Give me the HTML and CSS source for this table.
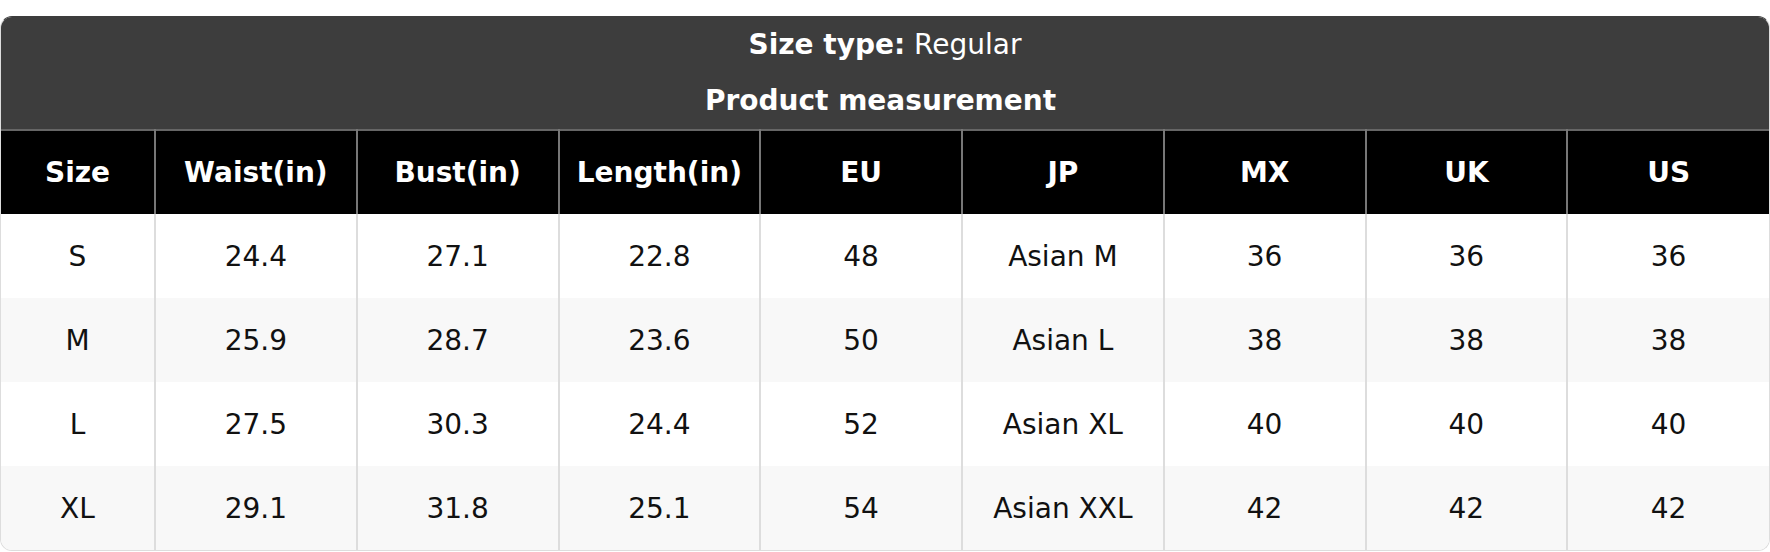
FILE: index.html
```html
<!DOCTYPE html>
<html>
<head>
<meta charset="utf-8">
<link rel="stylesheet" href="styles.css">
</head>
<body>
<div class="page">
  <div class="card">
    <div class="title">
      <div class="title-line"><b>Size type:</b> Regular</div>
      <div class="title-line title-sub"><b>Product measurement</b></div>
    </div>
    <table class="chart">
      <colgroup>
        <col class="col-size">
        <col><col><col><col><col><col><col><col>
      </colgroup>
      <thead>
        <tr>
          <th>Size</th><th>Waist(in)</th><th>Bust(in)</th><th>Length(in)</th><th>EU</th><th>JP</th><th>MX</th><th>UK</th><th>US</th>
        </tr>
      </thead>
      <tbody>
        <tr><td>S</td><td>24.4</td><td>27.1</td><td>22.8</td><td>48</td><td>Asian M</td><td>36</td><td>36</td><td>36</td></tr>
        <tr><td>M</td><td>25.9</td><td>28.7</td><td>23.6</td><td>50</td><td>Asian L</td><td>38</td><td>38</td><td>38</td></tr>
        <tr><td>L</td><td>27.5</td><td>30.3</td><td>24.4</td><td>52</td><td>Asian XL</td><td>40</td><td>40</td><td>40</td></tr>
        <tr><td>XL</td><td>29.1</td><td>31.8</td><td>25.1</td><td>54</td><td>Asian XXL</td><td>42</td><td>42</td><td>42</td></tr>
      </tbody>
    </table>
  </div>
</div>
</body>
</html>
```

FILE: styles.css
```css
html, body {
  margin: 0;
  padding: 0;
  background: #ffffff;
}

.page {
  padding-top: 16px;
  font-family: "DejaVu Sans", "Liberation Sans", sans-serif;
  font-size: 28px;
  color: #111111;
}

.card {
  width: 1770px;
  box-sizing: border-box;
  border: 1px solid #dddddd;
  border-top-color: #3d3d3d;
  border-radius: 12px;
  overflow: hidden;
  background: #ffffff;
}

.title {
  background: #3d3d3d;
  color: #ffffff;
  text-align: center;
}

.title-line {
  height: 56px;
  line-height: 56px;
}

.title-sub {
  padding-right: 9px;
}

.title-line b {
  font-weight: bold;
}

.chart {
  width: 100%;
  table-layout: fixed;
  border-collapse: collapse;
  border-spacing: 0;
}

.col-size {
  width: 154px;
}

.chart thead tr {
  border-top: 2px solid #666666;
}

.chart th {
  background: #000000;
  color: #ffffff;
  font-weight: bold;
  height: 83px;
  padding: 0;
  text-align: center;
  vertical-align: middle;
  border-left: 2px solid #777777;
}

.chart td {
  height: 84px;
  padding: 0;
  text-align: center;
  vertical-align: middle;
  border-left: 2px solid #dddddd;
}

.chart th:first-child,
.chart td:first-child {
  border-left: none;
}

.chart tbody tr:nth-child(even) td {
  background: #f8f8f8;
}
```
